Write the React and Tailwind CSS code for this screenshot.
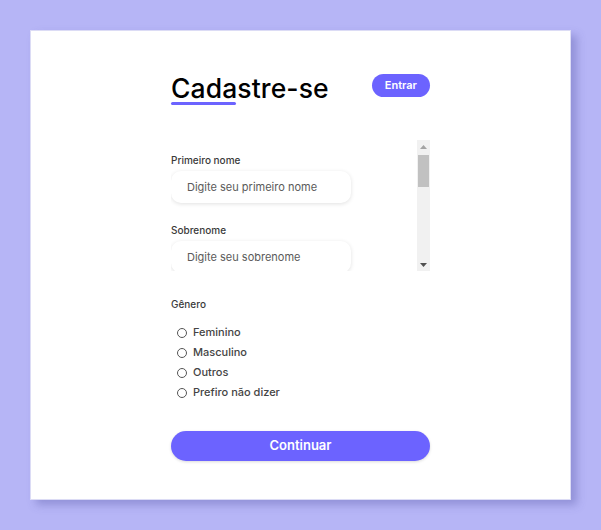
import React from 'react';

const fields = [
  { label: 'Primeiro nome', placeholder: 'Digite seu primeiro nome' },
  { label: 'Sobrenome', placeholder: 'Digite seu sobrenome' },
  { label: 'E-mail', placeholder: 'Digite seu e-mail' },
  { label: 'Celular', placeholder: '(xx) xxxx-xxxx' },
  { label: 'Senha', placeholder: 'Digite sua senha' },
  { label: 'Confirme sua senha', placeholder: 'Digite sua senha novamente' },
];

const generos = ['Feminino', 'Masculino', 'Outros', 'Prefiro não dizer'];

function ScrollBar() {
  return (
    <div className="w-[13px] h-full bg-[#f1f1f1] flex flex-col items-center">
      <div className="h-[13px] w-full flex items-center justify-center">
        <svg width="7" height="4" viewBox="0 0 7 4"><path d="M3.5 0L7 4H0z" fill="#a3a3a3" /></svg>
      </div>
      <div className="mt-[2px] w-[11px] h-[32px] bg-[#c1c1c1]" />
      <div className="flex-1" />
      <div className="h-[13px] w-full flex items-center justify-center">
        <svg width="7" height="4" viewBox="0 0 7 4"><path d="M0 0H7L3.5 4z" fill="#505050" /></svg>
      </div>
    </div>
  );
}

export default function App() {
  return (
    <div
      className="w-[601px] h-[530px] bg-[#b6b5f6] flex items-start justify-center pt-[30px]"
      style={{ fontFamily: 'Inter, "Noto Sans", sans-serif' }}
    >
      <div className="w-[541px] h-[470px] bg-white border border-[#dcdcf5] shadow-[6px_5px_8px_rgba(80,80,160,0.35)] flex justify-center">
        <div className="w-[259px] flex flex-col pt-[41px]">
          {/* cabeçalho */}
          <div className="flex items-start justify-between">
            <div className="flex flex-col">
              <h1 className="text-[26.5px] leading-[32px] font-medium text-black tracking-[0.1px]">Cadastre-se</h1>
              <div className="w-[65px] h-[3px] rounded-full bg-[#6c63ff] mt-[-2px]" />
            </div>
            <button className="mt-[2px] h-[23px] px-[13px] rounded-full bg-[#6c63ff] text-white text-[11px] font-semibold">
              Entrar
            </button>
          </div>

          {/* campos com rolagem */}
          <div className="mt-[35px] h-[131px] flex">
            <div className="flex-1 overflow-hidden">
              <div className="pt-[14px] pb-4 flex flex-col gap-[21px]">
                {fields.map((f) => (
                  <div key={f.label} className="flex flex-col">
                    <label className="text-[10px] leading-[12px] font-medium text-[#3a3a3a] mb-[5px]">{f.label}</label>
                    <input
                      placeholder={f.placeholder}
                      className="w-[180px] h-[32px] rounded-[10px] bg-white px-[16px] text-[11px] text-[#444] placeholder:text-[#5a5a5a] shadow-[0_1px_4px_rgba(0,0,0,0.12)] outline-none"
                    />
                  </div>
                ))}
              </div>
            </div>
            <ScrollBar />
          </div>

          {/* gênero */}
          <div className="mt-[27px] text-[10px] leading-[12px] font-medium text-[#3a3a3a]">Gênero</div>
          <div className="mt-[16px] ml-[6px] flex flex-col gap-[7px]">
            {generos.map((g) => (
              <label key={g} className="flex items-center gap-[6px] text-[11px] leading-[13px] font-medium text-[#444]">
                <span className="w-[10px] h-[10px] rounded-full border border-[#555] bg-white" />
                {g}
              </label>
            ))}
          </div>

          <button className="mt-[32px] h-[30px] w-full rounded-full bg-[#6c63ff] text-white text-[13px] font-semibold shadow-[0_1px_3px_rgba(0,0,0,0.15)]">
            Continuar
          </button>
        </div>
      </div>
    </div>
  );
}
